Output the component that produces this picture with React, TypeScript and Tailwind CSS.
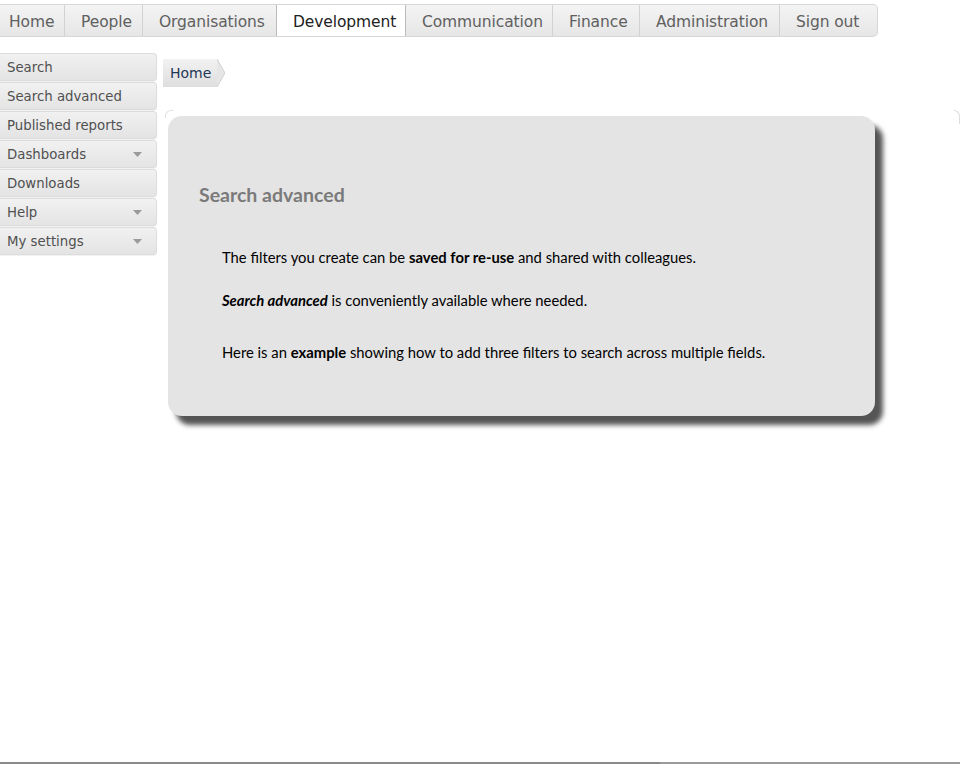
const tabs: { label: string; w: number }[] = [
  { label: 'Home', w: 65 },
  { label: 'People', w: 78 },
  { label: 'Organisations', w: 133 },
  { label: 'Development', w: 130 },
  { label: 'Communication', w: 147 },
  { label: 'Finance', w: 87 },
  { label: 'Administration', w: 140 },
  { label: 'Sign out', w: 97 },
]

const side: { label: string; drop?: boolean }[] = [
  { label: 'Search' },
  { label: 'Search advanced' },
  { label: 'Published reports' },
  { label: 'Dashboards', drop: true },
  { label: 'Downloads' },
  { label: 'Help', drop: true },
  { label: 'My settings', drop: true },
]

const verdana = { fontFamily: '"DejaVu Sans", Verdana, sans-serif' }
const calibri = { fontFamily: 'Lato, "Open Sans", sans-serif' }

export default function App() {
  return (
    <div className="relative h-[764px] w-[960px] overflow-hidden bg-white" style={verdana}>
      {/* top menu */}
      <div className="pt-[4px]">
        <div className="flex h-[33px] w-[878px] overflow-hidden rounded-r-[5px] border border-l-0 border-[#d6d6d6] bg-gradient-to-b from-[#f4f4f4] to-[#e6e6e6]">
          {tabs.map((t, i) => (
            <div
              key={t.label}
              style={{ width: t.w }}
              className={`flex shrink-0 items-center whitespace-nowrap pt-[4px] text-[15.5px] tracking-[-0.1px] ${
                t.label === 'Development' ? 'border-x border-[#bbb] bg-white text-[#222]' : 'text-[#606060]'
              } ${i === 0 ? 'pl-[9px]' : 'pl-[16px]'} ${
                t.label === 'Sign out' || t.label === 'Organisations' || t.label === 'Development' ? '' : 'border-r border-[#d2d2d2]'
              }`}
            >
              {t.label}
            </div>
          ))}
        </div>
      </div>

      <div className="mt-[16px] flex">
        {/* sidebar */}
        <div className="flex w-[157px] flex-col gap-[1px]">
          {side.map((s) => (
            <div
              key={s.label}
              className="flex h-[28px] items-center justify-between rounded-r-[4px] border border-l-0 border-[#dcdcdc] bg-gradient-to-b from-[#f1f1f1] to-[#e4e4e4] pl-[7px] pr-[14px] pt-[1px] text-[13.3px] text-[#505050] shadow-[0_1px_1px_rgba(0,0,0,0.06)]"
            >
              <span>{s.label}</span>
              {s.drop && (
                <svg width="9" height="5" viewBox="0 0 9 5">
                  <path d="M0 0h9L4.5 5z" fill="#9a9a9a" />
                </svg>
              )}
            </div>
          ))}
        </div>

        {/* main */}
        <div className="flex-1 pl-[6px]">
          <div className="mt-[6px] flex">
            <div className="flex h-[28px] items-center bg-gradient-to-b from-[#f2f2f2] to-[#dedede] pl-[7px] pr-[6px] pt-[1px] text-[14px] text-[#1e3657]">
              Home
            </div>
            <svg width="8" height="28" viewBox="0 0 8 28">
              <path d="M0 0 L8 14 L0 28 Z" fill="#e6e6e6" />
              <path d="M0 0 L8 14 L0 28" fill="none" stroke="#d0d0d0" strokeWidth="1" />
            </svg>
          </div>

          <div className="relative mt-[23px] h-[320px] pl-[5px] pt-[6px]">
            <div className="absolute left-[2px] top-0 h-[8px] w-[8px] rounded-tl-[6px] border-l border-t border-[#e2e2e2]" />
            <div className="absolute right-0 top-0 h-[14px] w-[6px] rounded-tr-[6px] border-r border-t border-[#dddddd]" />
            <div
              className="h-[300px] w-[707px] rounded-[14px] bg-[#e4e4e4] pt-[64px] shadow-[8px_9px_5px_#555]"
              style={calibri}
            >
              <h2 className="pl-[31px] text-[19.5px] font-bold text-[#7a7a7a]">Search advanced</h2>
              <div className="pl-[54px] pt-[37px] text-[14.8px] text-black">
                <p>
                  The filters you create can be <b>saved for re-use</b> and shared with colleagues.
                </p>
                <p className="mt-[21px]">
                  <b className="italic">Search advanced</b> is conveniently available where needed.
                </p>
                <p className="mt-[29px]">
                  Here is an <b>example</b> showing how to add three filters to search across multiple fields.
                </p>
              </div>
            </div>
          </div>
        </div>
      </div>

      {/* bottom line */}
      <div className="absolute bottom-0 left-0 flex h-[2px] w-full">
        <div className="w-[660px] bg-[#8a8a8a]" />
        <div className="flex-1 bg-[#9a9a9a]" />
      </div>
    </div>
  )
}
